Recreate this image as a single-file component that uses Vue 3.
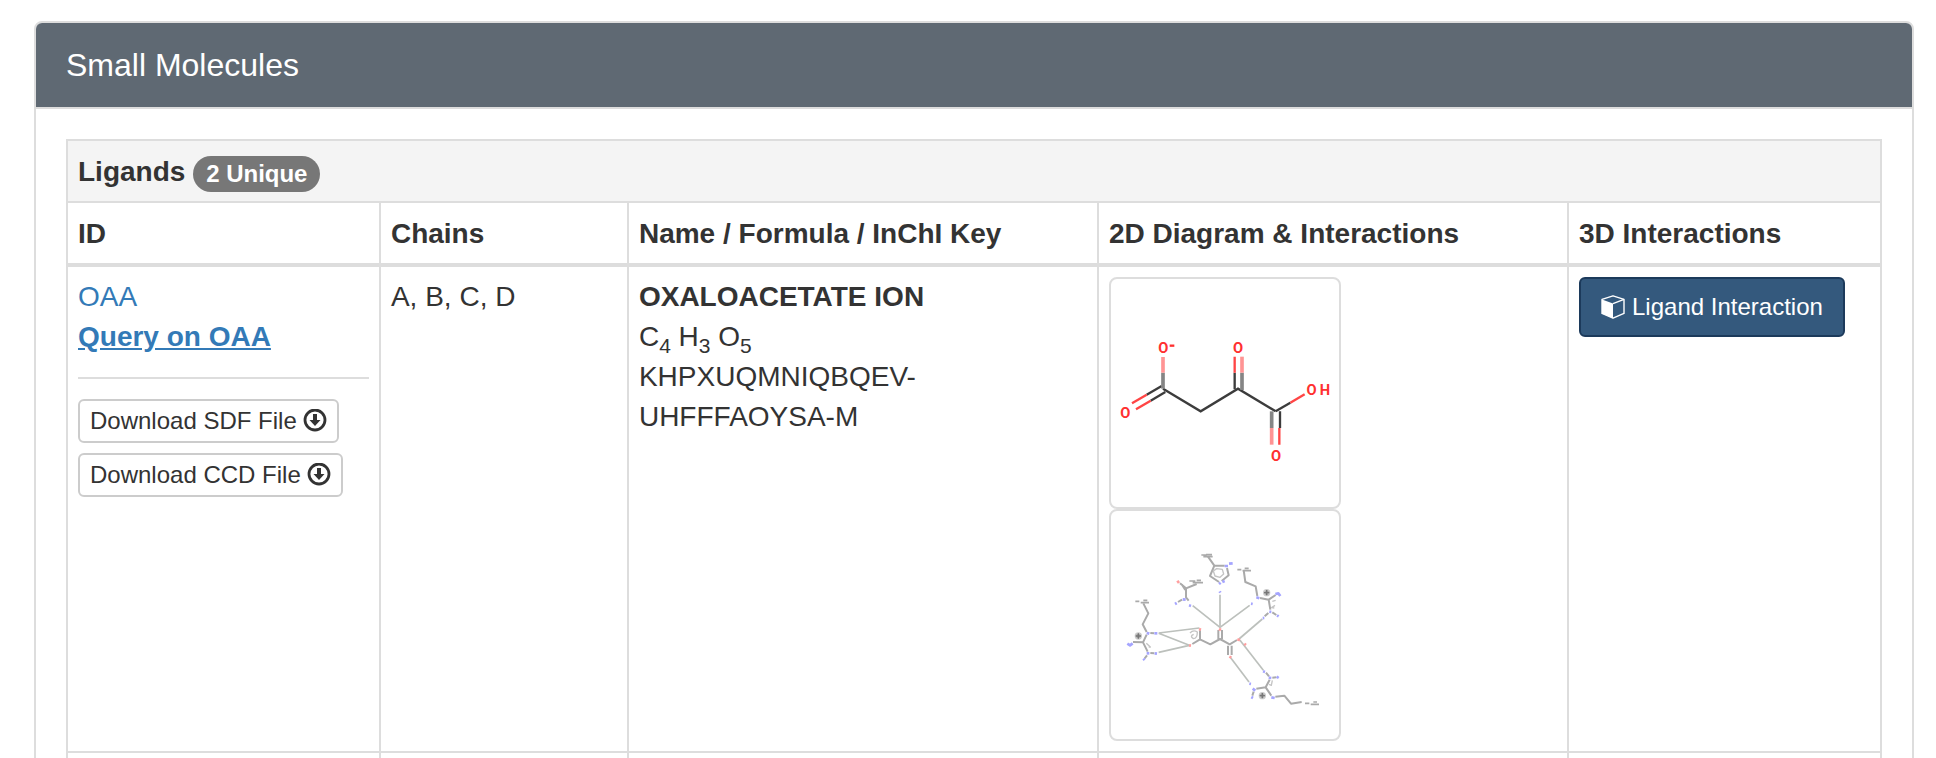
<script setup>
const columns = ['ID', 'Chains', 'Name / Formula / InChI Key', '2D Diagram & Interactions', '3D Interactions']
const downloads = ['Download SDF File', 'Download CCD File']

const carbonBonds = [
  'M219 386 L332 454 L444 386 L557 454',
  'M215 378 L170 404 M226 396 L182 422',
  'M557 454 L601 428',
  'M434 338 V388 M570 454 V504'
]
const softCarbonBonds = ['M219 338 V386', 'M456 338 V390', 'M545 454 V504']
const oxygenBonds = [
  'M170 404 L126 430 M182 422 L138 448',
  'M601 428 L644 403',
  'M434 290 V338 M568 504 V554'
]
const softOxygenBonds = ['M219 291 V338', 'M456 290 V338', 'M545 504 V554']
const atoms = [
  { x: 220, y: 278, t: 'O' },
  { x: 444, y: 278, t: 'O' },
  { x: 106, y: 475, t: 'O' },
  { x: 558, y: 602, t: 'O' },
  { x: 665, y: 405, t: 'O' },
  { x: 705, y: 405, t: 'H' }
]

const contacts = [
  'M278 317 L360 382 L449 316',
  'M360 284 V378',
  'M487 357 L417 417',
  'M176 399 L298 384 M176 400 L268 436 M176 457 L268 436',
  'M392 473 L447 546',
  'M420 421 L490 511'
]
const residues = [
  'M324 170 L343 197 H374 M343 197 L330 228 L357 246 M381 204 L386 226 L365 243',
  'M290 252 L258 265 L240 250 M256 270 L246 254 M258 265 V292 L266 302 M246 299 L234 306',
  'M431 210 L436 246 L467 259 L472 288 M480 294 L506 299 L527 285 M506 299 L511 329 M505 339 L494 349 M517 337 L529 345',
  'M130 310 L145 340 L128 373 L140 396 M151 399 L162 400 M140 404 L129 427 L143 455 M129 427 L99 426 M151 459 L163 460 M141 466 L134 475',
  'M300 391 V418 L331 433 L360 417 L389 433 L411 420 M300 418 L277 432',
  'M355 390 V417 M366 390 V417 M384 437 V465 M395 437 V465',
  'M509 539 L497 562 L469 566 M497 562 L514 587 M526 590 L553 587 L573 611 L605 606 M461 575 L457 587 M498 518 L507 529 M517 533 L529 532'
]
const delocal = [
  'M340 213 L345 228 L360 232 L371 222 L367 208 L350 206 Z',
  'M527 301 L517 304 M525 316 L515 323 L523 324',
  'M139 430 L151 441 L146 441',
  'M270 399 Q280 388 292 396 Q292 416 280 416 Q268 408 281 403',
  'M517 541 L514 556 L507 553'
]
const nitrogens = [
  'M374 198 L384 198 M387 191 L398 190', 'M357 252 L362 248 M367 246 L374 243', 'M359 274 L361 278',
  'M248 298 L257 299', 'M225 312 L230 309', 'M267 316 L273 318',
  'M469 292 L478 295', 'M526 282 L535 280 L541 288', 'M453 311 L458 312', 'M508 335 L514 336', 'M488 354 L493 354', 'M531 346 L536 349',
  'M140 399 L148 401', 'M163 400 L172 400', 'M82 431 L90 436 L98 430', 'M140 460 L148 460', 'M164 460 L171 461', 'M130 476 L134 480',
  'M489 514 L495 516', 'M506 533 L514 534', 'M530 530 L536 534', 'M448 551 L453 552', 'M458 566 L466 572', 'M454 591 L459 594', 'M514 592 L524 594'
]
const oxygens = ['M232 242 L237 249', 'M297 387 L303 389', 'M267 436 L273 437', 'M357 387 L363 390', 'M412 418 L420 421', 'M433 431 L438 435', 'M388 470 L394 473']
const stubs = [
  'M304 165 H320 M310 170 H338 M318 164 H336',
  'M268 243 H286 M278 248 H309 M290 241 H303',
  'M412 209 H424 M428 212 H453 M434 205 H446',
  'M106 304 H118 M122 308 H147 M130 301 H142',
  'M615 610 H628 M632 613 H657 M640 606 H651'
]
const charges = [[500, 278], [115, 408], [487, 587]]
</script>

<template>
  <main class="page">
    <section class="panel">
      <header class="panel-heading"><h1>Small Molecules</h1></header>
      <div class="panel-body">
        <table class="ligands">
          <colgroup>
            <col class="w-id"><col class="w-chains"><col class="w-name"><col class="w-name"><col class="w-id">
          </colgroup>
          <thead>
            <tr class="title-row">
              <th colspan="5">Ligands <span class="badge">2 Unique</span></th>
            </tr>
            <tr class="head-row">
              <th v-for="c in columns" :key="c" scope="col">{{ c }}</th>
            </tr>
          </thead>
          <tbody>
            <tr>
              <td>
                <a href="#oaa">OAA</a><br>
                <a class="query" href="#query-oaa">Query on OAA</a>
                <hr>
                <div class="downloads">
                  <button v-for="d in downloads" :key="d" class="btn-small" type="button">
                    {{ d }}
                    <svg class="icon" viewBox="0 0 24 24" aria-hidden="true">
                      <circle cx="12" cy="11" r="10" fill="none" stroke="currentColor" stroke-width="2.8" />
                      <path d="M10 5h4v6h3.5L12 17l-5.500-6H10z" fill="currentColor" />
                    </svg>
                  </button>
                </div>
              </td>
              <td>A, B, C, D</td>
              <td>
                <strong>OXALOACETATE ION</strong><br>
                <span class="formula">C<sub>4</sub> H<sub>3</sub> O<sub>5</sub></span><br>
                KHPXUQMNIQBQEV-<br>UHFFFAOYSA-M
              </td>
              <td>
                <a class="thumb" href="#diagram" aria-label="2D diagram of OAA">
                  <svg viewBox="63 57 684 684" fill="none">
                    <g stroke-width="7">
                      <path v-for="d in carbonBonds" :key="d" :d="d" stroke="#3c3c3c" />
                      <path v-for="d in oxygenBonds" :key="d" :d="d" stroke="#ff4545" />
                    </g>
                    <g stroke-width="11">
                      <path v-for="d in softCarbonBonds" :key="d" :d="d" stroke="#858585" />
                      <path v-for="d in softOxygenBonds" :key="d" :d="d" stroke="#ff9494" />
                    </g>
                    <path d="M239 257H253" stroke="#ff3030" stroke-width="7" />
                    <text v-for="a in atoms" :key="a.x + '-' + a.y" :x="a.x" :y="a.y" class="atom">{{ a.t }}</text>
                  </svg>
                </a>
                <a class="thumb" href="#interactions" aria-label="2D interactions of OAA">
                  <svg viewBox="33 33 684 684" fill="none" stroke-linejoin="round">
                    <path v-for="d in contacts" :key="d" :d="d" stroke="#bcc0bc" stroke-width="5" />
                    <path v-for="d in residues" :key="d" :d="d" stroke="#aaa" stroke-width="6" />
                    <path v-for="d in delocal" :key="d" :d="d" stroke="#c4c4c4" stroke-width="4" />
                    <path v-for="d in stubs" :key="d" :d="d" stroke="#aaa" stroke-width="5" />
                    <path v-for="d in nitrogens" :key="d" :d="d" stroke="#a5a5ff" stroke-width="8" />
                    <path v-for="d in oxygens" :key="d" :d="d" stroke="#ff9e9e" stroke-width="8" />
                    <g v-for="c in charges" :key="c[0]" :transform="`translate(${c[0]} ${c[1]})`">
                      <circle r="9" fill="#aaa" stroke="#ccc" stroke-width="4" />
                      <path d="M-8 0H8M0-8V8" stroke="#777" stroke-width="4" />
                    </g>
                  </svg>
                </a>
              </td>
              <td>
                <button class="btn-primary" type="button">
                  <svg class="icon" viewBox="0 0 24 24" aria-hidden="true">
                    <path d="M12 .8 23 4.400V18.400L12 23.200 1 18.400V4.400z" fill="none" stroke="currentColor" stroke-width="1.400" stroke-linejoin="round" />
                    <path d="M1 4.400 12 8.600v14.600L1 18.400z" fill="currentColor" />
                    <path d="M12 8.600 23 4.400" stroke="currentColor" stroke-width="1.400" />
                  </svg>
                  Ligand Interaction
                </button>
              </td>
            </tr>
            <tr>
              <td v-for="n in 5" :key="n"></td>
            </tr>
          </tbody>
        </table>
      </div>
    </section>
  </main>
</template>

<style>
html,
body {
  background: #fff;
}
</style>

<style scoped>
.page {
  box-sizing: border-box;
  height: 100vh;
  overflow: hidden;
  padding: 21px 22px 0 34px;
  font-family: "Liberation Sans", Arial, sans-serif;
  font-size: 28px;
  line-height: 40px;
  color: #333;
}
.panel {
  border: 2px solid #ddd;
  border-radius: 8px;
}
.panel-heading {
  padding: 20px 30px;
  background: #5f6973;
  border-bottom: 2px solid #ddd;
  border-radius: 6px 6px 0 0;
}
h1 {
  margin: 0;
  font-size: 32px;
  font-weight: 400;
  line-height: 44px;
  color: #fff;
}
.panel-body {
  padding: 30px;
}
.ligands {
  width: 100%;
  table-layout: fixed;
  border-collapse: separate;
  border-spacing: 0;
  border: solid #ddd;
  border-width: 2px 0 0 2px;
}
.w-id { width: 17.25%; }
.w-chains { width: 13.67%; }
.w-name { width: 25.91%; }
th,
td {
  padding: 10px;
  text-align: left;
  vertical-align: top;
  border: solid #ddd;
  border-width: 0 2px 2px 0;
}
th {
  padding: 11px 10px 9px;
}
.title-row th {
  background: #f4f4f4;
}
.head-row th {
  border-bottom-width: 4px;
}
.badge {
  display: inline-block;
  padding: 6px 13px;
  border-radius: 18px;
  background: #777;
  color: #fff;
  font-size: 24px;
  line-height: 24px;
  vertical-align: middle;
}
a {
  color: #337ab7;
  text-decoration: none;
}
.query {
  font-weight: 700;
  text-decoration: underline;
}
hr {
  margin: 20px 0;
  border: 0;
  border-top: 2px solid #ddd;
}
.downloads {
  display: flex;
  flex-direction: column;
  align-items: flex-start;
  gap: 10px;
}
button {
  display: inline-flex;
  align-items: center;
  gap: 6px;
  font-family: inherit;
  font-size: 24px;
  line-height: 36px;
  white-space: nowrap;
  cursor: pointer;
}
.btn-small {
  padding: 2px 10px;
  border: 2px solid #ccc;
  border-radius: 6px;
  background: #fff;
  color: #333;
}
.btn-primary {
  gap: 7px;
  padding: 10px 20px;
  border: 2px solid #1c3a5b;
  border-radius: 6px;
  background: #34597d;
  color: #fff;
}
.icon {
  width: 24px;
  height: 24px;
}
.formula sub {
  font-size: 21px;
  line-height: 0;
}
.thumb {
  display: block;
  box-sizing: border-box;
  width: 232px;
  height: 232px;
  border: 2px solid #ddd;
  border-radius: 8px;
  background: #fff;
}
.thumb svg {
  display: block;
  width: 100%;
  height: 100%;
}
.atom {
  font-family: Roboto, sans-serif;
  font-size: 44px;
  font-weight: 700;
  fill: #ff3030;
  text-anchor: middle;
}
</style>
